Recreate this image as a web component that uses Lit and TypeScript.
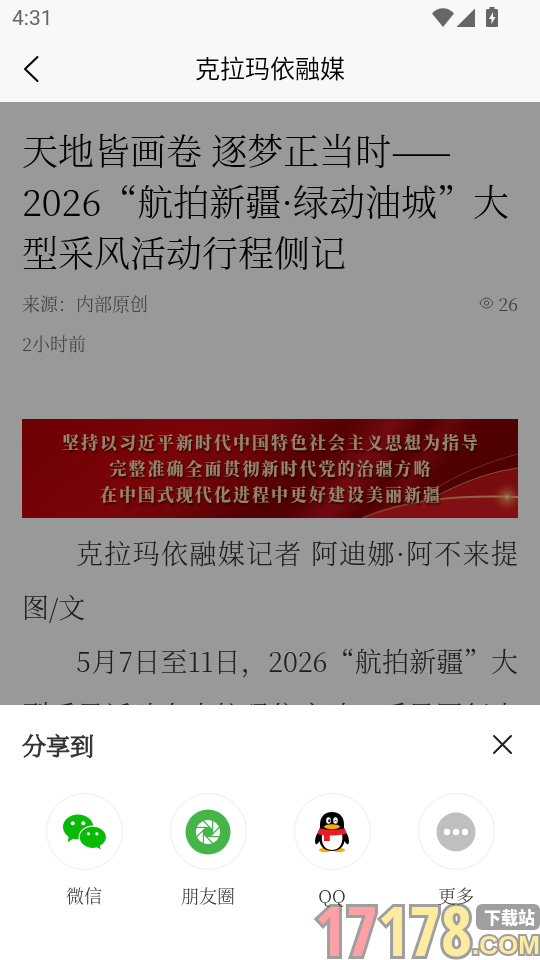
import { LitElement, html, css, svg } from "lit";
import { customElement } from "lit/decorators.js";

const wechatIcon = svg`
  <svg viewBox="0 0 60 52" width="60" height="52" aria-hidden="true">
    <path fill="#09bb07" d="M24 8.500C15.500 8.500 9 14.200 9 21c0 4 2.200 7.400 5.600 9.700L13.800 36l5.400-3.300c1.600.4 3.200.6 4.800.6 8.500 0 15.400-5.500 15.400-12.300S32.500 8.500 24 8.500z"/>
    <path fill="#09bb07" stroke="#fff" stroke-width="1.200" d="M38.800 20.100c-7.300 0-13.700 5-13.700 11.200S31.500 42.500 38.800 42.500c1.300 0 2.600-.2 3.800-.5l4.900 2.500-1-4.500c3.300-2 6-5.200 6-8.700 0-6.200-6.400-11.200-13.700-11.200z"/>
    <g fill="#fff"><circle cx="18.700" cy="17.300" r="2"/><circle cx="29.300" cy="17.300" r="2"/><circle cx="34.400" cy="27.800" r="1.600"/><circle cx="42.900" cy="27.800" r="1.600"/></g>
  </svg>`;

const bladeAngles = [0, 45, 90, 135, 180, 225, 270, 315];
const momentsIcon = svg`
  <svg viewBox="-23 -23 46 46" width="46" height="46" aria-hidden="true">
    <circle r="22.500" fill="#45b549"/>
    <circle r="12" fill="#fff"/>
    <polygon fill="#45b549" points="-1.900,-4.600 1.900,-4.600 4.600,-1.900 4.600,1.900 1.900,4.600 -1.900,4.600 -4.600,1.900 -4.600,-1.900"/>
    ${bladeAngles.map((a) => svg`<path transform="rotate(${a})" d="M1.900 -4.600H-12" stroke="#45b549" stroke-width="1.200"/>`)}
  </svg>`;

const qqIcon = svg`
  <svg viewBox="0 0 36 42" width="36" height="42" aria-hidden="true">
    <ellipse cx="11" cy="39" rx="6" ry="2.200" fill="#faab07"/><ellipse cx="25" cy="39" rx="6" ry="2.200" fill="#faab07"/>
    <path d="M18 1C10 1 6 6.500 6 13.500V18C3.500 21.500 1 26 1 30c0 2.500.8 3.600 1.600 3.300C3.700 33 4.800 31.500 5.500 30c1 6.500 6 10 12.500 10s11.500-3.500 12.500-10c.7 1.500 1.800 3 2.900 3.300.8.300 1.600-.8 1.600-3.300 0-4-2.500-8.500-5-12v-4.500C30 6.500 26 1 18 1z"/>
    <path fill="#fff" d="M8.500 22h19.300c2 8-.8 17-9.800 17S6.500 30 8.500 22z"/>
    <path fill="#eb1c26" d="M5.200 17.300c8.500 2 17.200 2 25.600 0l1.700 5.500c-4.500 1.200-10 1.800-16.700 1.800V30H10v-5.800c-2.500-.2-4.600-.6-6.500-1.100z"/>
    <ellipse cx="14.500" cy="9.500" rx="2.300" ry="3.300" fill="#fff"/><ellipse cx="21.500" cy="9.500" rx="2.300" ry="3.300" fill="#fff"/>
    <ellipse cx="15.200" cy="9.800" rx="1" ry="1.500"/><path d="M20.300 10.500q1.200-2.500 2.300 0" stroke="#000" fill="none"/>
    <path fill="#faab07" d="M10 15.500c2-3 14-3 16 0-1 3.600-15 3.600-16 0z"/>
  </svg>`;

const moreIcon = svg`
  <svg viewBox="0 0 40 40" width="40" height="40" aria-hidden="true">
    <circle cx="20" cy="20" r="19.500" fill="#bfbfbf"/>
    <g fill="#fff"><circle cx="11" cy="20" r="3.200"/><circle cx="20" cy="20" r="3.200"/><circle cx="29" cy="20" r="3.200"/></g>
  </svg>`;

const targets = [
  { name: "微信", icon: wechatIcon },
  { name: "朋友圈", icon: momentsIcon },
  { name: "QQ", icon: qqIcon },
  { name: "更多", icon: moreIcon },
];

@customElement("app-root")
export class AppRoot extends LitElement {
  static styles = css`
    :host {
      display: flex;
      flex-direction: column;
      position: relative;
      height: 100vh;
      overflow: hidden;
      background: #fff;
      color: #000;
      font-family: "Noto Serif CJK SC", "Liberation Serif", "Noto Sans CJK SC", serif;
      font-weight: 300;
    }
    * { box-sizing: border-box; }
    h1, h2, p { margin: 0; font-weight: inherit; }
    button { border: 0; padding: 0; margin: 0; background: none; font: inherit; color: inherit; display: block; }
    svg { display: block; }
    .top { background: #f8f8f8; flex: none; }
    .status {
      display: flex;
      justify-content: space-between;
      align-items: center;
      height: 36px;
      padding: 0 40px 0 12px;
      font: 400 21px/36px Roboto, sans-serif;
      color: #666;
    }
    .nav {
      display: grid;
      grid-template-columns: 40px 1fr 40px;
      align-items: center;
      height: 66px;
      padding: 0 12px 4px;
    }
    .nav h1 { font: 400 25px/36px "Noto Sans CJK SC DemiLight", "Noto Sans CJK SC", sans-serif; text-align: center; }
    .view { position: relative; flex: 1 1 0; min-height: 0; overflow: hidden; }
    .article { padding: 22px 22px 0; }
    .scrim { position: absolute; inset: 0; background: rgba(0, 0, 0, 0.4); }
    .headline { font-size: 36px; line-height: 51px; }
    .meta { display: flex; flex-wrap: wrap; justify-content: space-between; margin-top: 6px; font-size: 18px; line-height: 40px; color: #666; }
    .views { display: flex; align-items: center; gap: 5px; }
    .time { flex-basis: 100%; }
    .banner {
      position: relative;
      margin-top: 56px;
      height: 99px;
      overflow: hidden;
      background:
        linear-gradient(125deg, transparent 58%, rgba(225, 30, 45, 0.6) 66%, transparent 72%, rgba(225, 30, 45, 0.4) 76%, transparent 81%),
        linear-gradient(140deg, #b40006 0%, #cc080e 30%, #b80a10 42%, #8c0004 55%, #800004 100%);
    }
    .ribbon { position: absolute; right: 0; bottom: 0; }
    .slogan {
      position: relative;
      padding: 10px 0 0 2px;
      font-size: 17px;
      line-height: 26px;
      font-weight: 900;
      letter-spacing: 2px;
      text-align: center;
      color: #f6dcb4;
      text-shadow: 1px 2px 2px rgba(70, 0, 0, 0.8);
    }
    .body { font-size: 27px; line-height: 54px; color: #333; margin-top: 8px; }
    .body p { text-indent: 54px; text-align: justify; }
    .sheet { flex: none; background: #fff; color: #333; padding: 20px 22px 50px; }
    .sheet-head { display: flex; justify-content: space-between; align-items: center; height: 40px; padding-right: 4px; }
    .sheet-head h2 { font-size: 24px; line-height: 36px; -webkit-text-stroke: 1px #333; }
    .targets { display: grid; grid-template-columns: repeat(4, 1fr); margin-top: 28px; }
    .target { display: flex; flex-direction: column; align-items: center; gap: 10px; font-size: 18px; line-height: 30px; }
    .ring { display: grid; place-items: center; width: 77px; height: 77px; border: 1px solid #eee; border-radius: 50%; }
    .mark { position: absolute; right: 0; bottom: 0; display: flex; align-items: flex-end; pointer-events: none; mix-blend-mode: multiply; }
    .stroked { -webkit-text-stroke: 6px #9f9f9f; paint-order: stroke fill; color: #fdeba0; }
    .digits { font: 700 68px/60px "Open Sans Condensed", "Open Sans", sans-serif; }
    .red { color: #ff9fa6; }
    .side { display: flex; flex-direction: column; align-items: flex-end; }
    .badge { font: 900 17px/26px "Noto Sans CJK SC", sans-serif; color: #fff; background: #9f9f9f; border-radius: 6px; padding: 0 5px 0 8px; }
    .com { font: 700 26px/30px "Liberation Sans", sans-serif; }
    .com.stroked { -webkit-text-stroke-width: 4px; }
  `;

  render() {
    return html`
      <header class="top">
        <div class="status">
          <span>4:31</span>
          <svg width="68" height="24" viewBox="0 0 68 24" fill="#666" aria-hidden="true">
            <path d="M0 7.500C6 .5 16 .5 22 7.500L11 21z"/>
            <path d="M24.500 21L43 2.500V21z"/>
            <path fill-rule="evenodd" d="M55.500 3h2V1h5v2h2a1.500 1.500 0 0 1 1.500 1.500v15A1.500 1.500 0 0 1 64.500 21h-9a1.500 1.500 0 0 1-1.500-1.500v-15A1.500 1.500 0 0 1 55.500 3zM61 6L57 13H59.500v5l4-7h-2.500z"/>
          </svg>
        </div>
        <nav class="nav">
          <button aria-label="返回">
            <svg width="40" height="36" viewBox="0 0 40 36" fill="none" stroke="#000" stroke-width="2" stroke-linecap="round" stroke-linejoin="round"><path d="M25.500 8L13 20L25.500 32"/></svg>
          </button>
          <h1>克拉玛依融媒</h1>
        </nav>
      </header>
      <main class="view">
        <article class="article">
          <h1 class="headline">天地皆画卷 逐梦正当时——2026“航拍新疆·绿动油城”大型采风活动行程侧记</h1>
          <div class="meta">
            <span>来源：内部原创</span>
            <span class="views">
              <svg width="15" height="12" viewBox="0 0 15 12" fill="none" stroke="#777" aria-hidden="true"><path d="M1 6C4 -.6 11 -.6 14 6C11 12.600 4 12.600 1 6z"/><circle cx="7.500" cy="6" r="2.200"/></svg>26
            </span>
            <span class="time">2小时前</span>
          </div>
          <div class="banner">
            <svg class="ribbon" width="160" height="66" viewBox="0 0 160 66" fill="none" aria-hidden="true">
              <defs>
                <radialGradient id="glow"><stop offset="0" stop-color="#fff0c8"/><stop offset=".25" stop-color="#ffa060" stop-opacity=".7"/><stop offset="1" stop-color="#ff6040" stop-opacity="0"/></radialGradient>
                <linearGradient id="edge"><stop offset="0" stop-color="#ffb060" stop-opacity=".4"/><stop offset="1" stop-color="#ffc888"/></linearGradient>
              </defs>
              <path d="M75 46C100 32 130 20 160 16V66H40z" fill="#c8141a"/>
              <path d="M4 66C50 47 100 43 160 45V66z" fill="#d81a20"/>
              <path d="M75 38C100 22 130 10 160 2" stroke="#a8504c"/>
              <path d="M75 46C100 32 130 20 160 16" stroke="#d88a58"/>
              <path d="M4 66C50 47 100 43 160 45" stroke="url(#edge)" stroke-width="2"/>
              <circle cx="149" cy="45" r="14" fill="url(#glow)"/>
            </svg>
            <p class="slogan">坚持以习近平新时代中国特色社会主义思想为指导<br>完整准确全面贯彻新时代党的治疆方略<br>在中国式现代化进程中更好建设美丽新疆</p>
          </div>
          <div class="body">
            <p>克拉玛依融媒记者 阿迪娜·阿不来提 图/文</p>
            <p>5月7日至11日，2026“航拍新疆”大型采风活动在克拉玛依启动，采风团行走油城</p>
          </div>
        </article>
        <div class="scrim"></div>
      </main>
      <section class="sheet" aria-label="分享到">
        <div class="sheet-head">
          <h2>分享到</h2>
          <button aria-label="关闭">
            <svg width="22" height="22" viewBox="0 0 22 22" stroke="#222" stroke-width="2" stroke-linecap="round"><path d="M2 2L19 19M19 2L2 19"/></svg>
          </button>
        </div>
        <div class="targets">
          ${targets.map((t) => html`<button class="target"><span class="ring">${t.icon}</span><span>${t.name}</span></button>`)}
        </div>
      </section>
      <div class="mark">
        <span class="digits stroked"><span class="red">17</span>178</span>
        <span class="side"><span class="badge">下载站</span><span class="com stroked">.COM</span></span>
      </div>
    `;
  }
}
